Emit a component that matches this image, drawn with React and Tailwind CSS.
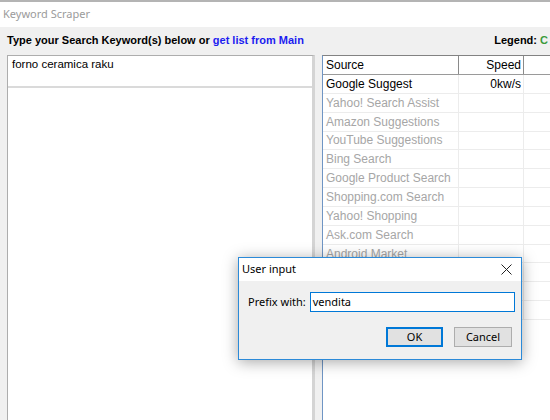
import React from "react";

const rows = [
  ["Google Suggest", "0kw/s", true],
  ["Yahoo! Search Assist", "", false],
  ["Amazon Suggestions", "", false],
  ["YouTube Suggestions", "", false],
  ["Bing Search", "", false],
  ["Google Product Search", "", false],
  ["Shopping.com Search", "", false],
  ["Yahoo! Shopping", "", false],
  ["Ask.com Search", "", false],
  ["Android Market", "", false],
  ["", "", false],
  ["", "", false],
  ["", "", false],
];

export default function App() {
  return (
    <div className="relative w-[550px] h-[420px] overflow-hidden bg-[#f0f0f0] font-['Liberation_Sans',Arial,sans-serif] text-black">
      <div className="h-[27px] bg-white border-t-2 border-[#b4b4b4] flex items-center pl-[3px] text-[11px] text-[#9b9b9b] font-['Noto_Sans',sans-serif]">
        Keyword Scraper
      </div>
      <div className="flex items-center justify-between h-[27px] pl-[7px]">
        <div className="font-bold text-[11px] whitespace-nowrap">
          Type your Search Keyword(s) below or <span className="text-[#1c1cf0]">get list from Main</span>
        </div>
        <div className="font-bold text-[11px] whitespace-nowrap mr-[2px]">
          Legend: <span className="text-[#3a9a3a]">C</span>
        </div>
      </div>
      <div className="flex pl-[7px] h-[366px] mt-[1px]">
        <div className="w-[308px] shrink-0 border border-[#adadad] border-r-[3px] border-r-[#d4d4d4] bg-white flex flex-col">
          <div className="h-[30px] px-[4px] pt-[1px] leading-[14px] text-[11.5px]">forno ceramica raku</div>
          <div className="border-t-2 border-[#dadada] flex-1"></div>
        </div>
        <div className="ml-[7px] flex-1 border-l border-t border-l-[#6f95c4] border-t-[#828282] bg-white overflow-hidden">
          <div className="w-[300px]">
            <div className="flex h-[19px] items-center text-[12px] border-b border-[#9a9a9a]">
              <div className="w-[136px] shrink-0 pl-[3px] border-r border-[#8a8a8a] h-full flex items-center">Source</div>
              <div className="w-[65px] shrink-0 pr-[2px] border-r border-[#8a8a8a] h-full flex items-center justify-end">Speed</div>
              <div className="flex-1"></div>
            </div>
            {rows.map(([name, speed, active], i) => (
              <div key={i} className="flex h-[18.85px] items-center text-[12px] border-b border-[#ececec]">
                <div className={`w-[136px] shrink-0 pl-[3px] border-r border-[#ececec] h-full flex items-center whitespace-nowrap ${active ? "text-black" : "text-[#a6a6a6]"}`}>{name}</div>
                <div className="w-[65px] shrink-0 pr-[2px] border-r border-[#ececec] h-full flex items-center justify-end">{speed}</div>
                <div className="flex-1"></div>
              </div>
            ))}
          </div>
        </div>
      </div>

      <div className="absolute left-[238px] top-[257px] w-[284px] h-[103px] border border-[#2b8ad8] bg-[#f0f0f0] shadow-[0_2px_14px_rgba(0,0,0,0.35)] font-['Noto_Sans',sans-serif] text-[11px]">
        <div className="h-[23px] bg-white flex items-center justify-between pl-[3px] pr-[8px]">
          <span>User input</span>
          <svg width="11" height="11" viewBox="0 0 11 11" className="mr-[1px]">
            <path d="M0.5 0.5 L10.5 10.5 M10.5 0.5 L0.5 10.5" stroke="#222" strokeWidth="1" />
          </svg>
        </div>
        <div className="flex items-center mt-[11px] pl-[9px] gap-[4px]">
          <span className="whitespace-nowrap shrink-0">Prefix with:</span>
          <div className="w-[205px] shrink-0 h-[20px] border border-[#0078d7] bg-white flex items-center pl-[2px]">vendita</div>
        </div>
        <div className="flex justify-end gap-[11px] mt-[15px] pr-[9px]">
          <div className="w-[57px] h-[20px] border-2 border-[#0078d7] bg-[#e1e1e1] flex items-center justify-center">OK</div>
          <div className="w-[58px] h-[20px] border border-[#adadad] bg-[#e1e1e1] flex items-center justify-center">Cancel</div>
        </div>
      </div>
    </div>
  );
}
